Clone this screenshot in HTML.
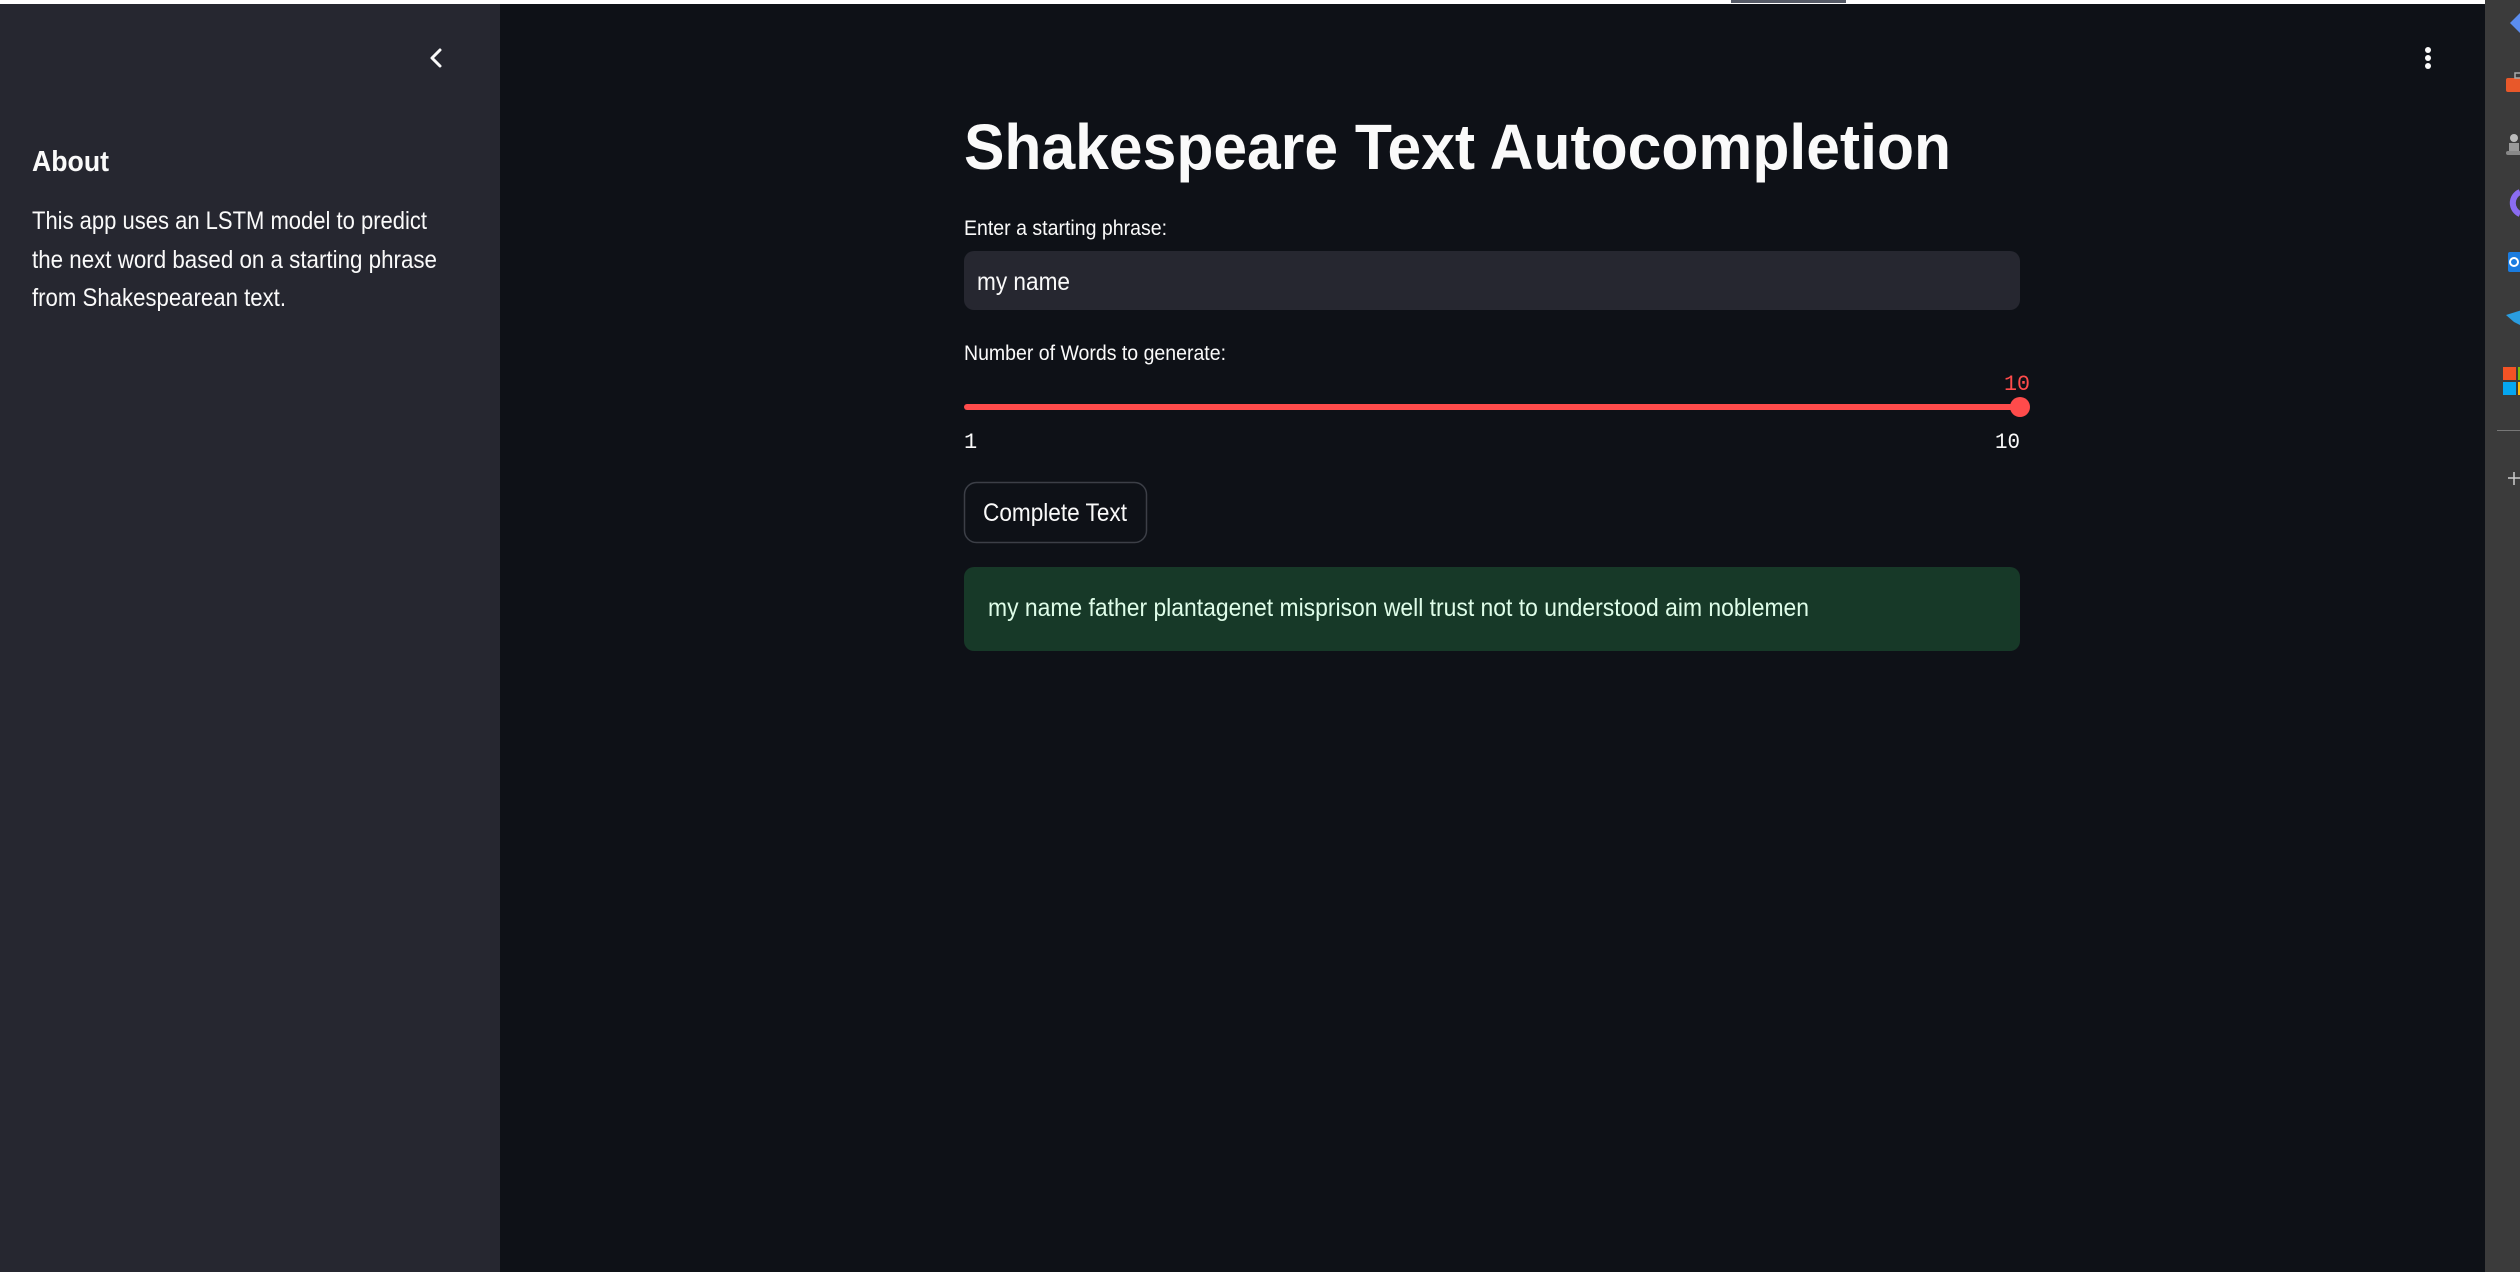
<!DOCTYPE html>
<html><head><meta charset="utf-8"><style>
html,body{margin:0;padding:0;width:2520px;height:1272px;overflow:hidden;background:#0e1117;}
svg{display:block}
</style></head><body>
<svg width="2520" height="1272" xmlns="http://www.w3.org/2000/svg" font-family="Liberation Sans, sans-serif">
<rect width="2520" height="1272" fill="#0e1117"/>
<rect x="0" y="0" width="500" height="1272" fill="#262730"/>
<rect x="0" y="0" width="2485" height="4" fill="#ffffff"/>
<rect x="1731" y="0" width="115" height="3" fill="#555a66"/>
<rect x="2485" y="0" width="35" height="1272" fill="#3b3b3b"/>
<!-- chevron -->
<path d="M440 50 L432 58 L440 66" stroke="#fafafa" stroke-width="3" fill="none" stroke-linecap="round" stroke-linejoin="round"/>
<!-- sidebar text -->
<text x="32" y="171" font-size="29" font-weight="bold" fill="#fafafa" textLength="77" lengthAdjust="spacingAndGlyphs">About</text>
<text x="32" y="229" font-size="25" fill="#fafafa" textLength="395" lengthAdjust="spacingAndGlyphs">This app uses an LSTM model to predict</text>
<text x="32" y="268" font-size="25" fill="#fafafa" textLength="405" lengthAdjust="spacingAndGlyphs">the next word based on a starting phrase</text>
<text x="32" y="306" font-size="25" fill="#fafafa" textLength="254" lengthAdjust="spacingAndGlyphs">from Shakespearean text.</text>
<!-- menu dots -->
<circle cx="2428" cy="50" r="3" fill="#fafafa"/><circle cx="2428" cy="58" r="3" fill="#fafafa"/><circle cx="2428" cy="66" r="3" fill="#fafafa"/>
<!-- title -->
<text x="964" y="169" font-size="64" font-weight="bold" fill="#fafafa" textLength="987" lengthAdjust="spacingAndGlyphs">Shakespeare Text Autocompletion</text>
<text x="964" y="235" font-size="21" fill="#fafafa" textLength="203" lengthAdjust="spacingAndGlyphs">Enter a starting phrase:</text>
<rect x="964" y="251" width="1056" height="59" rx="10" fill="#262730"/>
<text x="977" y="290" font-size="25" fill="#fafafa" textLength="93" lengthAdjust="spacingAndGlyphs">my name</text>
<text x="964" y="360" font-size="21" fill="#fafafa" textLength="262" lengthAdjust="spacingAndGlyphs">Number of Words to generate:</text>
<text x="2004" y="390" font-size="22" font-family="Liberation Mono, monospace" fill="#ff4b4b" textLength="26" lengthAdjust="spacingAndGlyphs">10</text>
<rect x="964" y="404" width="1056" height="6" rx="3" fill="#ff4b4b"/>
<circle cx="2020" cy="407" r="10" fill="#ff4b4b"/>
<text x="964" y="448" font-size="22" font-family="Liberation Mono, monospace" fill="#fafafa">1</text>
<text x="1995" y="448" font-size="22" font-family="Liberation Mono, monospace" fill="#fafafa" textLength="25" lengthAdjust="spacingAndGlyphs">10</text>
<rect x="964.5" y="482.5" width="182" height="60" rx="12" fill="#0e1117" stroke="#3c3f47" stroke-width="1.5"/>
<text x="983" y="521" font-size="25" fill="#fafafa" textLength="144" lengthAdjust="spacingAndGlyphs">Complete Text</text>
<rect x="964" y="567" width="1056" height="84" rx="10" fill="#173928"/>
<text x="988" y="616" font-size="25" fill="#dffde9" textLength="821" lengthAdjust="spacingAndGlyphs">my name father plantagenet misprison well trust not to understood aim noblemen</text>
<!-- right panel icons -->
<path d="M2510 23 L2522 11 L2522 35 Z" fill="#5b8def"/>
<rect x="2506" y="78" width="16" height="14" rx="2" fill="#e8582a"/>
<rect x="2515" y="73" width="7" height="5" fill="none" stroke="#aaa" stroke-width="1.5"/>
<circle cx="2514" cy="138" r="4" fill="#bbb"/><rect x="2509" y="143" width="10" height="9" fill="#999"/><rect x="2506" y="151" width="16" height="4" rx="2" fill="#888"/>
<path d="M2520 192 A12 12 0 0 0 2520 214" stroke="#8a6cf0" stroke-width="6" fill="none"/>
<rect x="2508" y="252" width="14" height="20" rx="2" fill="#1a7ce0"/><circle cx="2514" cy="262" r="4" fill="none" stroke="#fff" stroke-width="2"/>
<path d="M2506 315 L2522 310 L2522 326 L2514 322 Z" fill="#2a9de0"/>
<rect x="2503" y="367" width="13" height="13" fill="#f35325"/><rect x="2518" y="367" width="4" height="13" fill="#81bc06"/>
<rect x="2503" y="382" width="13" height="13" fill="#05a6f0"/><rect x="2518" y="382" width="4" height="13" fill="#ffba08"/>
<rect x="2497" y="430" width="23" height="1" fill="#777"/>
<path d="M2508 478 H2520 M2514 472 V485" stroke="#ccc" stroke-width="1.5"/>
</svg>
</body></html>
